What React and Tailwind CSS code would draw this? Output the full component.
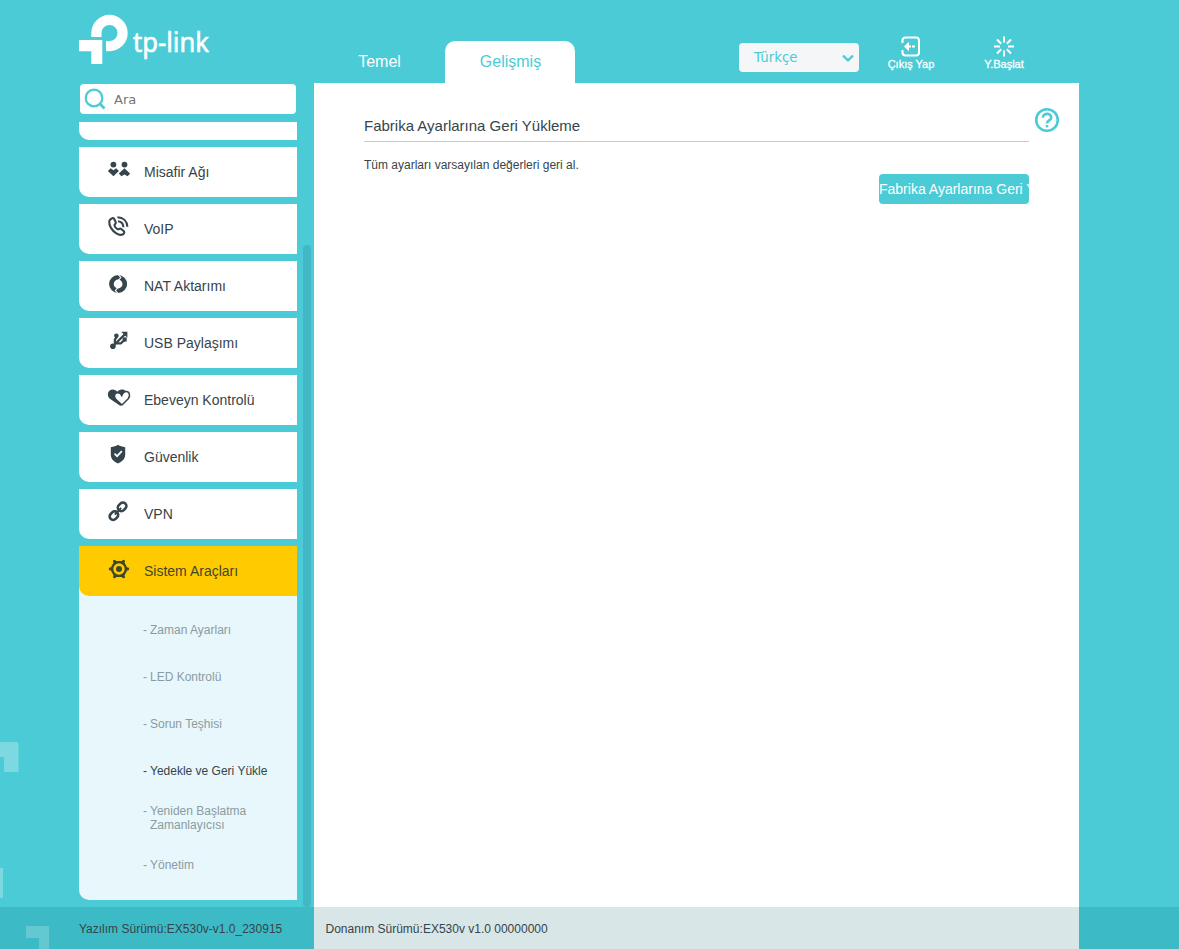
import React, { useState } from "react";

const MisafirIcon = () => (
  <svg width="24" height="24" viewBox="0 0 24 24" fill="currentColor">
    <circle cx="7.4" cy="7.6" r="2.9" />
    <circle cx="18.5" cy="7.6" r="2.9" />
    <path d="M1.900 14 4.600 11.200 7.400 13.200 10.200 11.200 12.900 14 7.400 19.300z" />
    <path d="M18.500 11.200 24.200 16.600 21.600 19.300 18.500 17.400 15.400 19.300 12.800 16.600z" />
  </svg>
);

const VoipIcon = () => (
  <svg width="24" height="24" viewBox="0 0 24 24" fill="none" stroke="currentColor" strokeWidth="2.1">
    <path d="M6.3 4.2C2.6 5.4 2.4 9.2 4.8 13.6c2.8 4.6 7.4 7.900 10.900 7.200 2-.5 3.300-2.200 2.200-3.600l-3-2.400c-1.400-.8-2.200 1-3.400.4-1.300-.7-2.800-2.600-3-3.800-.2-1.300 1.800-1.500 1.300-3L8.300 5C7.900 4 7.200 3.900 6.300 4.200z" />
    <path d="M12 7.300c3.200.3 5.300 2.600 5.400 5.900" />
    <path d="M11.400 3.200c5.800.2 9.700 4 10 9.600" />
  </svg>
);

const NatIcon = () => (
  <svg width="24" height="24" viewBox="0 0 24 24" fill="none">
    <circle cx="12.1" cy="13" r="6.7" stroke="currentColor" strokeWidth="4.6" />
    <path d="M12 3.400l2.800 3.100-2.800 3.100M12.200 22.600l-2.800-3.100 2.800-3.100" stroke="#fff" strokeWidth="1.1" />
  </svg>
);

const UsbIcon = () => (
  <svg width="24" height="24" viewBox="0 0 24 24" fill="none" stroke="currentColor" strokeWidth="2.2">
    <circle cx="6.900" cy="18.300" r="2.800" fill="currentColor" stroke="none" />
    <path d="M6.900 18.300 18.800 6.400" />
    <path d="M21.400 3.700v6L15.200 3.700z" fill="currentColor" stroke="none" />
    <path d="M8.900 16.200V11.500l1.300-1.500V8M10.200 15.300h4.800l3.300-3.200" strokeLinejoin="round" />
    <circle cx="10.400" cy="7.700" r="2.300" fill="currentColor" stroke="none" />
    <path d="M16.700 9.400h4v4.200h-4z" fill="currentColor" stroke="none" />
  </svg>
);

const HeartsIcon = () => (
  <svg width="26" height="24" viewBox="0 0 26 24">
    <path d="M14.500 21 3.500 13.400C.4 10 2 4.600 6.600 4.600c2.200 0 3.700 1 4.700 2.200 1-1.200 2.500-2.200 4.600-2.200 3 0 5 2 5 5z" fill="currentColor" />
    <path d="M16 20 9.800 14.200C7.300 11.300 8.600 7.700 11.600 7.700c1.900 0 3.400 1.200 4.200 2.900 1-2.600 2.400-4 4.400-4 3.400 0 4.400 4.400 2 7.200z" fill="#fff" stroke="currentColor" strokeWidth="1.5" />
  </svg>
);

const ShieldIcon = () => (
  <svg width="24" height="24" viewBox="0 0 24 24" fill="none">
    <path d="M12 2.800c2 1.400 4.300 2.100 7.200 2.400v7.400c0 4.500-3.200 7.400-7.200 8.800-4-1.400-7.200-4.300-7.200-8.800V5.200c2.900-.3 5.200-1 7.200-2.400z" fill="currentColor" />
    <path d="m8.500 11.700 2.600 2.500 4.700-5" stroke="#fff" strokeWidth="1.800" />
  </svg>
);

const LinkIcon = () => (
  <svg width="24" height="24" viewBox="0 0 24 24" fill="none" stroke="currentColor" strokeWidth="2.6">
    <rect x="3.300" y="13.200" width="9.200" height="7" rx="3.500" transform="rotate(-45 7.900 16.700)" />
    <rect x="11.500" y="4.300" width="9.200" height="7" rx="3.500" transform="rotate(-45 16.100 7.800)" />
    <path d="m8.800 15.600 6.400-6.700" strokeWidth="1.900" />
  </svg>
);

const GearIcon = () => (
  <svg width="26" height="26" viewBox="0 0 26 26" fill="none">
    <path
      d="M8.400 5h9.200L22 13l-4.400 8H8.400L4 13z"
      fill="currentColor"
    />
    <g fill="currentColor">
      <circle cx="4.200" cy="13" r="1.400" />
      <circle cx="21.800" cy="13" r="1.400" />
      <circle cx="8.500" cy="5.200" r="1.500" />
      <circle cx="17.500" cy="5.200" r="1.500" />
      <circle cx="8.500" cy="20.800" r="1.500" />
      <circle cx="17.500" cy="20.800" r="1.500" />
    </g>
    <circle cx="13" cy="13" r="5.700" fill="#ffcb00" />
    <circle cx="13" cy="13" r="3" fill="currentColor" />
  </svg>
);

const menuItems = [
  { id: "guest", label: "Misafir Ağı", icon: MisafirIcon },
  { id: "voip", label: "VoIP", icon: VoipIcon },
  { id: "nat", label: "NAT Aktarımı", icon: NatIcon },
  { id: "usb", label: "USB Paylaşımı", icon: UsbIcon },
  { id: "parental", label: "Ebeveyn Kontrolü", icon: HeartsIcon },
  { id: "security", label: "Güvenlik", icon: ShieldIcon },
  { id: "vpn", label: "VPN", icon: LinkIcon },
];

const subItems = [
  "Zaman Ayarları",
  "LED Kontrolü",
  "Sorun Teşhisi",
  "Yedekle ve Geri Yükle",
  "Yeniden Başlatma Zamanlayıcısı",
  "Yönetim",
];

const Logo = () => (
  <svg width="140" height="54" viewBox="0 0 140 54" fill="#fff" className="mt-[13px] block">
    <path d="M12.300 24V20a18.200 18.200 0 1 1 18.200 18.200H27V28h3.500a8 8 0 1 0-8-8v4z" />
    <path d="M0 27h23.300v24H12.300V38.200H0z" />
    <text
      x="54"
      y="38.500"
      fontSize="27"
      fontFamily='"Noto Sans", sans-serif'
      textLength="76"
      lengthAdjust="spacingAndGlyphs"
      stroke="#fff"
      strokeWidth="0.600"
    >
      tp-link
    </text>
  </svg>
);

// Faint corner marks on the page background
const Backdrop = () => (
  <svg className="absolute left-0 top-[730px]" width="60" height="219" viewBox="0 0 60 219" fill="#fff">
    <path d="M0 12h16.500q2 0 2 2v28H4V27H0z" opacity=".28" />
    <path d="M0 138h3v30H0z" opacity=".28" />
    <path d="M26 196h23v23H39v-11H26z" opacity=".2" />
  </svg>
);

const Sidebar = ({ active, setActive }) => (
  <div className="relative w-[235px] shrink-0">
    <Logo />
    <div className="mt-[17px] ml-px flex h-[30px] w-[216px] items-center rounded bg-white">
      <svg width="34" height="30" viewBox="0 0 34 30" fill="none" stroke="#4acbd6" strokeWidth="2.2">
        <circle cx="14" cy="14" r="8.300" />
        <path d="m19.800 19.800 4.700 4.700" strokeWidth="2.800" />
      </svg>
      <input
        type="text"
        placeholder="Ara"
        className="w-[170px] bg-transparent pt-px font-['DejaVu_Sans',sans-serif] text-[13px] outline-none placeholder:text-[#757575]"
      />
    </div>

    {/* Menu */}
    <div className="mt-2 flex w-[218px] flex-col gap-[7px]">
      <div className="h-[18px] rounded-bl-[10px] bg-white" />
      {menuItems.map(({ id, label, icon: Icon }) => (
        <button key={id} className="flex h-[50px] rounded-bl-[10px] bg-white text-left text-[14px]">
          <span className="ml-[27px] mt-[10px] w-[38px] text-[#36444b]">
            <Icon />
          </span>
          <span className="leading-[50px]">{label}</span>
        </button>
      ))}
      <div className="rounded-bl-[10px] bg-[#e7f7fb]">
        <button className="flex h-[50px] w-full rounded-bl-[10px] bg-[#ffcb00] text-left text-[14px]">
          <span className="ml-[27px] mt-[10px] w-[38px] text-[#3f472b]">
            <GearIcon />
          </span>
          <span className="leading-[50px] text-[#3f472b]">Sistem Araçları</span>
        </button>
        <ul className="h-[304px] pl-16 pt-[10px] text-[12px] leading-[14px]">
          {subItems.map((item) => (
            <li
              key={item}
              onClick={() => setActive(item)}
              className={`flex h-[47px] cursor-pointer items-center ${
                active === item ? "text-[#36444b]" : "text-[#8b9b9f]"
              }`}
            >
              <div className="flex items-start">
                <span className="w-[7px]">-</span>
                <span className="max-w-[125px]">{item}</span>
              </div>
            </li>
          ))}
        </ul>
      </div>
    </div>

    {/* Scrollbar thumb */}
    <div className="absolute left-[224px] top-[245px] h-[662px] w-2 rounded bg-[#41b8c3]" />
  </div>
);

const Header = () => (
  <div className="flex h-[83px] items-end">
    <button className="h-[42px] w-[131px] text-[16px] text-white">Temel</button>
    <button className="h-[42px] w-[130px] rounded-t-[10px] bg-white pl-px text-[16px] text-[#4acbd6]">
      Gelişmiş
    </button>
    <div className="mb-[11px] ml-[164px] flex h-[29px] w-[120px] items-center justify-between rounded bg-[#f5f6f7] pl-[15px] pr-[5px] pt-px font-['DejaVu_Sans',sans-serif] text-[13.33px] text-[#4acbd6]">
      Türkçe
      <svg width="12" height="8" viewBox="0 0 12 8" fill="none" stroke="#4acbd6" strokeWidth="2.4">
        <path d="M1 1.500 6 6.300 11 1.500" />
      </svg>
    </div>
    <button className="mb-3 ml-[22px] flex w-[60px] flex-col items-center text-[11px] leading-[13px] text-white [-webkit-text-stroke:0.3px_white]">
      <svg width="22" height="22" viewBox="0 0 22 22" fill="none" stroke="#fff" strokeWidth="2">
        <path d="M2.500 7V4.500q0-3 3-3h10.500q3 0 3 3v12q0 3-3 3H5.500q-3 0-3-3V14" />
        <path d="M4 10.500 9 5.800v3.700h2v2H9v3.700z" fill="#fff" stroke="none" />
        <path d="M12 10.500h3" />
      </svg>
      Çıkış Yap
    </button>
    <button className="mb-3 ml-[33px] flex w-[60px] flex-col items-center text-[11px] leading-[13px] text-white [-webkit-text-stroke:0.3px_white]">
      <svg width="22" height="22" viewBox="0 0 22 22" stroke="#fff" strokeWidth="2">
        <path d="M11 .5v6M11 14.500v6M1 10.500h6M15 10.500h6M4 3.500l4.200 4.200M13.800 13.300l4.200 4.200M18 3.500l-4.200 4.200M8.200 13.300 4 17.500" />
      </svg>
      Y.Başlat
    </button>
  </div>
);

const App = () => {
  const [active, setActive] = useState("Yedekle ve Geri Yükle");

  return (
    <div className="relative flex h-[949px] w-[1179px] flex-col overflow-hidden bg-[#4acbd6] font-['Liberation_Sans',Arial,sans-serif] text-[#36444b]">
      <div className="flex h-[907px] pl-[79px]">
        <Sidebar active={active} setActive={setActive} />
        <div className="flex w-[765px] flex-col">
          <Header />
          <div className="flex flex-1 bg-white pl-[50px]">
            <div className="flex w-[665px] flex-col">
              <h2 className="h-[59px] border-b border-[#c8cccd] pt-[33px] text-[15px] leading-5">
                Fabrika Ayarlarına Geri Yükleme
              </h2>
              <p className="mt-[15px] text-[12px] leading-4">
                Tüm ayarları varsayılan değerleri geri al.
              </p>
              {/* Label is wider than the fixed button width and gets clipped */}
              <button className="mt-px h-[30px] w-[150px] self-end overflow-hidden whitespace-nowrap rounded bg-[#4acbd6] text-left text-[14px] text-white">
                Fabrika Ayarlarına Geri Yükle
              </button>
            </div>
            <svg className="ml-[5px] mt-6" width="26" height="26" viewBox="0 0 26 26" fill="none" stroke="#4acbd6" strokeWidth="2.6">
              <circle cx="13" cy="13" r="10.800" />
              <path d="M8.900 10.800c0-5.400 8.300-5 8.300-.4 0 3-4.200 2.900-4.200 6" />
              <path d="M13 18v2.400" />
            </svg>
          </div>
        </div>
      </div>
      <div className="flex h-[42px] bg-[#3cbbc6] text-[12px] leading-[44px]">
        <div className="w-[314px] pl-[79px]">Yazılım Sürümü:EX530v-v1.0_230915</div>
        <div className="w-[765px] bg-[#d9e6e7] pl-[11.500px]">
          Donanım Sürümü:EX530v v1.0 00000000
        </div>
      </div>
      <Backdrop />
    </div>
  );
};

export default App;
